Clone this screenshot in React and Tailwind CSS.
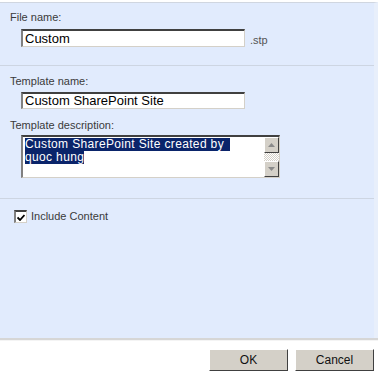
import React from 'react';

const inset = 'border-t-2 border-l-2 border-t-[#404040] border-l-[#808080] border-b border-r border-b-[#d4d0c8] border-r-[#d4d0c8] bg-white';

const ScrollButton = ({ down }) => (
    <div className="w-[15px] h-[16px] bg-[#d4d0c8] border border-t-white border-l-white border-b-[#404040] border-r-[#404040] flex items-center justify-center">
        <svg width="7" height="4" viewBox="0 0 7 4">
            {down
                ? <polygon points="0,0 7,0 3.5,4" fill="#8a8a8a" />
                : <polygon points="0,4 7,4 3.5,0" fill="#8a8a8a" />}
        </svg>
    </div>
);

const App = () => {
    return (
        <div className="w-[378px] h-[373px] bg-white overflow-hidden text-[11px] text-[#3a3a3a]" style={{ fontFamily: '"Liberation Sans", Arial, sans-serif' }}>
            <div className="pt-[2px]">
                <div className="h-[336px] bg-[#e1ebfd] border-t border-[#d0d6e0] border-r-4 border-r-[#e8effb] flex flex-col">
                    {/* file name */}
                    <div className="h-[63px] pl-[10px] pt-[8px] border-b border-[#cdd5e2]">
                        <div className="leading-[13px]">File name:</div>
                        <div className="flex items-end mt-[5px] ml-[11px]">
                            <div className={`w-[224px] h-[18px] ${inset} flex items-center pl-[2px] text-[13px] text-black`}>Custom</div>
                            <span className="ml-[5px] leading-[13px] text-[#555]">.stp</span>
                        </div>
                    </div>

                    {/* template */}
                    <div className="h-[133px] pl-[10px] pt-[9px] border-b border-[#cdd5e2]">
                        <div className="leading-[13px]">Template name:</div>
                        <div className={`mt-[4px] ml-[11px] w-[224px] h-[17px] ${inset} flex items-center pl-[2px] text-[13px] text-black`}>
                            Custom SharePoint Site
                        </div>
                        <div className="mt-[10px] leading-[13px]">Template description:</div>
                        <div className={`mt-[3px] ml-[11px] w-[259px] h-[43px] ${inset} flex`}>
                            <div className="flex-1 pl-[2px] pt-[1px] text-[12px] tracking-[0.35px] leading-[13px] text-white">
                                <div className="w-fit h-[13px] bg-[#0a246a] pr-[6px]">Custom SharePoint Site created by</div>
                                <div className="w-fit h-[13px] bg-[#0a246a]">quoc hung</div>
                            </div>
                            <div className="w-[15px] flex flex-col justify-between bg-[repeating-conic-gradient(#d4d0c8_0_25%,#ffffff_0_50%)] bg-[length:2px_2px]">
                                <ScrollButton />
                                <ScrollButton down />
                            </div>
                        </div>
                    </div>

                    {/* include content */}
                    <div className="pl-[14px] pt-[11px] flex items-center">
                        <div className={`w-[13px] h-[13px] ${inset} flex items-center justify-center`}>
                            <svg width="8" height="7" viewBox="0 0 8 7">
                                <path d="M0.5 3.5 L3 6 L7.5 1" stroke="black" strokeWidth="1.8" fill="none" />
                            </svg>
                        </div>
                        <span className="ml-[4px] leading-[13px]">Include Content</span>
                    </div>
                </div>
                <div className="h-[2px] bg-[#d6d6d6]" />
                <div className="h-[1px] bg-[#f4f4f4]" />
            </div>

            {/* buttons */}
            <div className="flex justify-end gap-[7px] pr-[4px] mt-[8px]">
                {['OK', 'Cancel'].map(label => (
                    <div key={label} className="w-[79px] h-[22px] bg-[#d4d0c8] border border-t-white border-l-white border-b-[#404040] border-r-[#404040] flex items-center justify-center text-[12px] text-[#111]">
                        {label}
                    </div>
                ))}
            </div>
        </div>
    );
};

export default App;
